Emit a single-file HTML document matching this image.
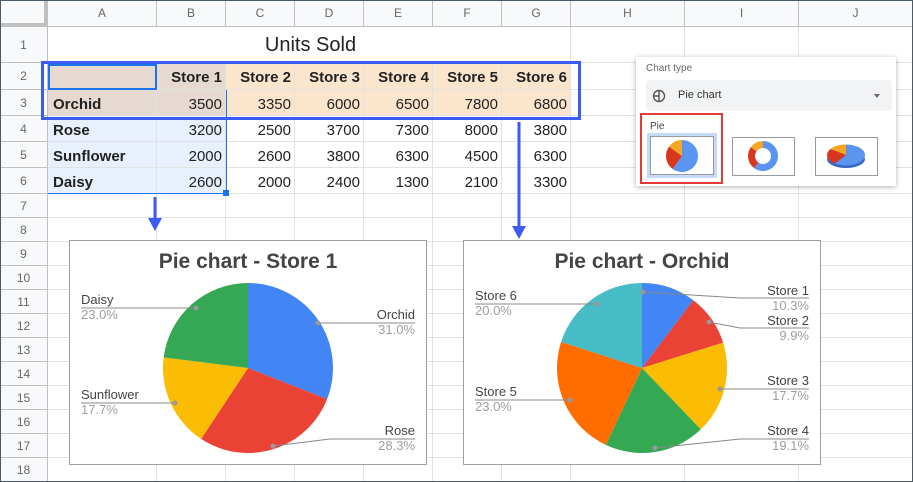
<!DOCTYPE html>
<html><head><meta charset="utf-8"><style>
*{margin:0;padding:0;box-sizing:border-box}
body{width:913px;height:482px;overflow:hidden;background:#fff;font-family:"Liberation Sans",Arial,sans-serif;position:relative}
.a{position:absolute}
.ch{position:absolute;top:0;height:27px;background:#f8f9fa;border-right:1px solid #c0c0c0;border-bottom:1px solid #c0c0c0;color:#666;font-size:12px;text-align:center;line-height:27px}
.rh{position:absolute;left:0;width:48px;background:#f8f9fa;border-right:1px solid #c0c0c0;border-bottom:1px solid #c0c0c0;color:#666;font-size:12px;text-align:center}
.c{position:absolute;font-size:15px;color:#222;text-align:right;padding-right:4px;white-space:nowrap}
.b{font-weight:bold}
.lbl{position:absolute;font-size:13px;color:#444;line-height:15px}
.pct{color:#9e9e9e}
</style></head><body>
<svg class="a" style="left:0;top:0" width="913" height="482" id="grid"></svg>
<div id="cells"></div>
<div class="a" style="left:49px;top:27px;width:521px;height:35px;background:#fff"></div>
<div class="a" style="left:226px;top:34px;width:169px;text-align:center;font-size:20px;color:#222">Units Sold</div>
<div class="a" style="left:41px;top:61px;width:540px;height:59px;border:3px solid #3c5bf0"></div>
<div class="a" style="left:48px;top:64px;width:109px;height:26px;border:2px solid #1a73e8"></div>
<div class="a" style="left:226px;top:90px;width:1px;height:104px;background:#1a73e8"></div>
<div class="a" style="left:48px;top:193px;width:178px;height:1px;background:#1a73e8"></div>
<div class="a" style="left:223px;top:190px;width:6px;height:6px;background:#1a73e8"></div>
<svg class="a" style="left:0;top:0" width="913" height="482">
<line x1="155" y1="197" x2="155" y2="220" stroke="#3c5bf0" stroke-width="3"/>
<polygon points="148,218 162,218 155,231" fill="#3c5bf0"/>
<line x1="519" y1="122" x2="519" y2="228" stroke="#3c5bf0" stroke-width="3"/>
<polygon points="512,226 526,226 519,239" fill="#3c5bf0"/>
</svg>
<div class="a" style="left:69px;top:240px;width:358px;height:225px;border:1px solid #9e9e9e;background:#fff"></div>
<div class="a" style="left:463px;top:240px;width:358px;height:225px;border:1px solid #9e9e9e;background:#fff"></div>
<div class="a" style="left:69px;top:250px;width:358px;text-align:center;font-size:21px;font-weight:bold;color:#444">Pie chart - Store 1</div>
<div class="a" style="left:463px;top:250px;width:358px;text-align:center;font-size:21px;font-weight:bold;color:#444">Pie chart - Orchid</div>
<svg class="a" style="left:0;top:0" width="913" height="482" id="pies"></svg>
<div class="lbl" style="left:81px;top:292px">Daisy<br><span class="pct">23.0%</span></div>
<div class="lbl" style="left:81px;top:387px">Sunflower<br><span class="pct">17.7%</span></div>
<div class="lbl" style="left:355px;top:307px;text-align:right;width:60px">Orchid<br><span class="pct">31.0%</span></div>
<div class="lbl" style="left:355px;top:423px;text-align:right;width:60px">Rose<br><span class="pct">28.3%</span></div>
<div class="lbl" style="left:475px;top:288px">Store 6<br><span class="pct">20.0%</span></div>
<div class="lbl" style="left:475px;top:384px">Store 5<br><span class="pct">23.0%</span></div>
<div class="lbl" style="left:749px;top:283px;text-align:right;width:60px">Store 1<br><span class="pct">10.3%</span></div>
<div class="lbl" style="left:749px;top:313px;text-align:right;width:60px">Store 2<br><span class="pct">9.9%</span></div>
<div class="lbl" style="left:749px;top:373px;text-align:right;width:60px">Store 3<br><span class="pct">17.7%</span></div>
<div class="lbl" style="left:749px;top:423px;text-align:right;width:60px">Store 4<br><span class="pct">19.1%</span></div>
<div class="a" style="left:636px;top:57px;width:260px;height:129px;background:#fff;box-shadow:0 1px 5px rgba(0,0,0,.3)"></div>
<div class="a" style="left:646px;top:63px;font-size:10px;color:#666">Chart type</div>
<div class="a" style="left:646px;top:80px;width:246px;height:31px;background:#f1f3f4;border-radius:4px"></div>
<svg class="a" style="left:652px;top:89px" width="14" height="14"><circle cx="7" cy="7" r="5.5" fill="none" stroke="#555" stroke-width="1.4"/><path d="M7 1.5V7H1.5M7 7V12.5" stroke="#555" stroke-width="1.4" fill="none"/></svg>
<div class="a" style="left:678px;top:89px;font-size:11px;color:#333">Pie chart</div>
<div class="a" style="left:874px;top:94px;border:3.5px solid transparent;border-top:4px solid #666;width:0;height:0"></div>
<div class="a" style="left:640px;top:113px;width:83px;height:71px;border:2px solid #e53935"></div>
<div class="a" style="left:650px;top:121px;font-size:10px;color:#444">Pie</div>
<div class="a" style="left:647px;top:133px;width:70px;height:45px;background:#c6dafc"></div>
<div class="a" style="left:650px;top:136px;width:64px;height:39px;background:#fff;border:1px solid #999"></div>
<div class="a" style="left:732px;top:137px;width:63px;height:39px;background:#fff;border:1px solid #999"></div>
<div class="a" style="left:815px;top:137px;width:63px;height:39px;background:#fff;border:1px solid #999"></div>
<svg class="a" style="left:0;top:0" width="913" height="482" id="mini"></svg>
<div class="a" style="left:0;top:0;width:913px;height:482px;border:1px solid #4a5a68"></div>
<script>
var g=document.getElementById('grid'),s='';
var cols=[48,157,226,295,364,433,502,571,685,799,913];
var rows=[27,63,90,116,142,168,194,218,242,266,290,314,338,362,386,410,434,458,482];
function rect(x,y,w,h,f){s+='<rect x="'+x+'" y="'+y+'" width="'+w+'" height="'+h+'" fill="'+f+'"/>';}
rect(48,63,178,53,'#e6d9d1');rect(226,63,345,53,'#fce5cd');rect(48,116,178,78,'#e8f0fe');
for(var i=0;i<cols.length;i++)s+='<line x1="'+(cols[i]-.5)+'" y1="27" x2="'+(cols[i]-.5)+'" y2="482" stroke="#e2e2e2"/>';
for(var j=0;j<rows.length;j++)s+='<line x1="48" y1="'+(rows[j]-.5)+'" x2="913" y2="'+(rows[j]-.5)+'" stroke="#e2e2e2"/>';
g.innerHTML=s;
var h='';var L=['A','B','C','D','E','F','G','H','I','J'];
h+='<div class="ch" style="left:0;width:48px;border-right:4px solid #c0c0c0;border-bottom:4px solid #c0c0c0"></div>';
for(i=0;i<10;i++)h+='<div class="ch" style="left:'+cols[i]+'px;width:'+(cols[i+1]-cols[i])+'px">'+L[i]+'</div>';
for(j=0;j<18;j++)h+='<div class="rh" style="top:'+rows[j]+'px;height:'+(rows[j+1]-rows[j])+'px;line-height:'+(rows[j+1]-rows[j])+'px">'+(j+1)+'</div>';
var data=[['','Store 1','Store 2','Store 3','Store 4','Store 5','Store 6'],['Orchid',3500,3350,6000,6500,7800,6800],['Rose',3200,2500,3700,7300,8000,3800],['Sunflower',2000,2600,3800,6300,4500,6300],['Daisy',2600,2000,2400,1300,2100,3300]];
for(var r=0;r<5;r++)for(var c=0;c<7;c++){var v=data[r][c];if(v==='')continue;var y=rows[r+1],hh=rows[r+2]-y;
var st='top:'+(y+3)+'px;left:'+cols[c]+'px;width:'+(cols[c+1]-cols[c])+'px;line-height:'+(hh-3)+'px;';
var cls='c'+((r==0||c==0)?' b':'');if(c==0)st+='text-align:left;padding-left:5px;';
h+='<div class="'+cls+'" style="'+st+'">'+v+'</div>';}
document.getElementById('cells').innerHTML=h;
function pie(cx,cy,R,vals,colors,inner){var tot=vals.reduce(function(a,b){return a+b},0),a=-Math.PI/2,o='';
vals.forEach(function(v,k){var b=a+v/tot*2*Math.PI;var x1=cx+R*Math.cos(a),y1=cy+R*Math.sin(a),x2=cx+R*Math.cos(b),y2=cy+R*Math.sin(b);
o+='<path d="M'+cx+' '+cy+'L'+x1+' '+y1+'A'+R+' '+R+' 0 '+((b-a)>Math.PI?1:0)+' 1 '+x2+' '+y2+'Z" fill="'+colors[k]+'"/>';a=b;});
if(inner)o+='<circle cx="'+cx+'" cy="'+cy+'" r="'+inner+'" fill="#fff"/>';return o;}
var p=pie(248,368,85,[3500,3200,2000,2600],['#4285f4','#ea4335','#fbbc04','#34a853']);
p+=pie(642,368,85,[3500,3350,6000,6500,7800,6800],['#4285f4','#ea4335','#fbbc04','#34a853','#ff6d01','#46bdc6']);
var ln=[[81,308,196,308],[81,403,175,403],[318,323,415,323],[273,446,330,439,415,439],[475,304,597,304],[475,400,570,400],[643,292,740,298,809,298],[709,322,740,328,809,328],[720,389,809,389],[655,448,740,439,809,439]];
ln.forEach(function(q){var d='M'+q[0]+' '+q[1];for(var k=2;k<q.length;k+=2)d+='L'+q[k]+' '+q[k+1];p+='<path d="'+d+'" stroke="#888" fill="none"/>';
var dx=(q[0]<q[q.length-2]&&q[0]>200&&q[0]<460)||(q[0]>600&&q[0]<760)?q[0]:q[q.length-2],dy=dx==q[0]?q[1]:q[q.length-1];p+='<circle cx="'+dx+'" cy="'+dy+'" r="2.5" fill="#999"/>';});
document.getElementById('pies').innerHTML=p;
var m=pie(682,156,16,[60,25,15],['#5b95f0','#d9361f','#f5a623']);
m+=pie(763,156,15,[60,25,15],['#5b95f0','#d9361f','#f5a623'],8);
m+='<ellipse cx="846" cy="159" rx="19" ry="9" fill="#3a66c4"/>';
m+='<g transform="translate(846,155) scale(1,0.55)">'+pie(0,0,19,[60,25,15],['#5b95f0','#d9361f','#f5a623'])+'</g>';
document.getElementById('mini').innerHTML=m;
</script>
</body></html>
